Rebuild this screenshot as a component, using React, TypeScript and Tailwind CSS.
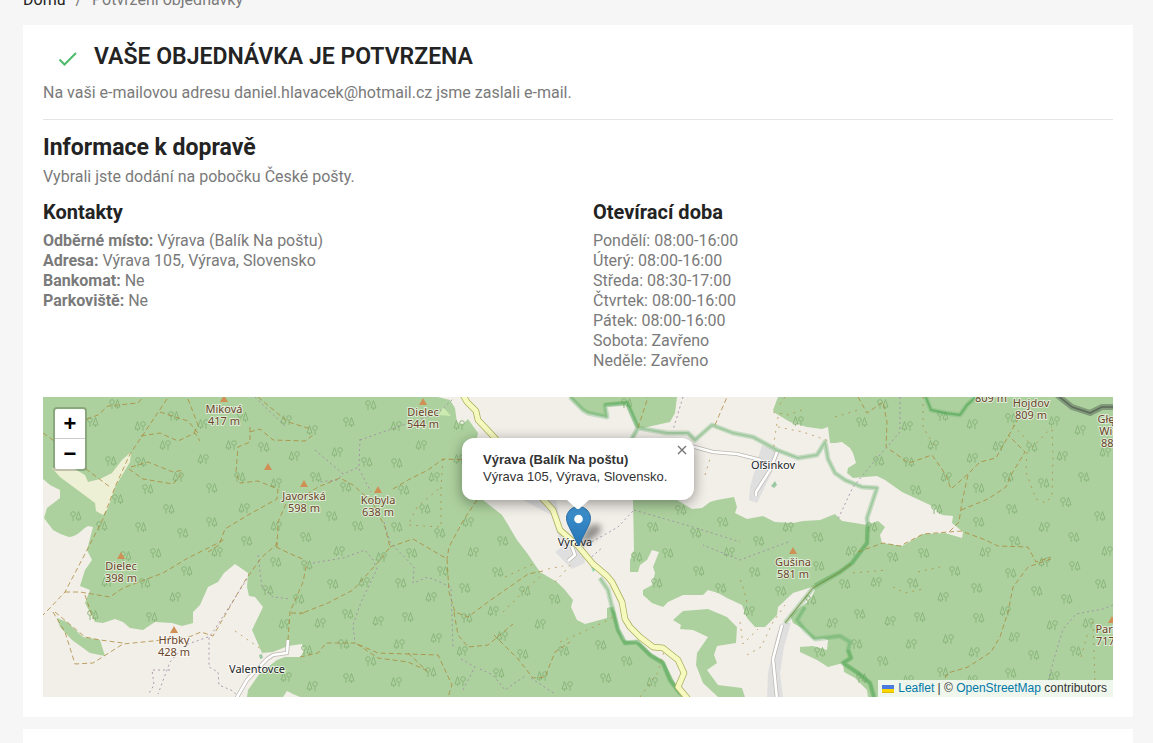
import { useState } from 'react'
import { clsx } from 'clsx'

const CONTACTS = [
  { label: 'Odběrné místo:', value: 'Výrava (Balík Na poštu)' },
  { label: 'Adresa:', value: 'Výrava 105, Výrava, Slovensko' },
  { label: 'Bankomat:', value: 'Ne' },
  { label: 'Parkoviště:', value: 'Ne' },
]

const OPENING_HOURS = [
  'Pondělí: 08:00-16:00',
  'Úterý: 08:00-16:00',
  'Středa: 08:30-17:00',
  'Čtvrtek: 08:00-16:00',
  'Pátek: 08:00-16:00',
  'Sobota: Zavřeno',
  'Neděle: Zavřeno',
]

const FOREST = [
  // west
  'M0 0H395L407 3 412 11 414 26 420 27 425 22 435 36 434 41 420 70 440 103 459 118 464 126 474 143 484 156 497 175 514 185 522 193 530 203 528 210 534 223 542 227 564 221 564 211 567 210 572 215 575 230 580 243 597 246 610 258 620 263 627 276 634 290 637 300H257L250 297 244 294 240 300H204L205 293 217 276 225 270 234 263 242 260 257 260 261 254 259 247 245 249 230 255 219 256 209 233 220 210 212 200 206 199 204 190 205 176 192 167 181 176 175 185 165 190 157 208 150 215 150 226 139 229 129 226 112 225 100 233 87 231 80 225 72 222 60 226 52 225 42 206 47 193 37 189 42 173 49 163 44 153 50 130 45 129C38 133 35 139 26 140 20 138 15 136 10 133L1 121 4 111 17 101V93L7 88 0 82Z',
  // east
  'M590 103H634L649 112 659 111 667 105 674 103 691 100 694 110 692 116 704 122 720 119 732 125 750 126 760 124 777 123 792 117 799 124 812 126 824 128 835 124 842 130 837 138 839 146 859 149 880 137 902 136 919 141 920 135 909 126 910 119 899 118 887 108 872 101 859 95 842 83 834 79 810 81 804 76 805 71 813 66 810 56 807 51 799 45 792 46H787L785 30 779 32 764 30 747 25 732 16 730 13 735 0H1070V300H825L824 293 812 281 801 275 800 266 785 270 774 263 757 255 757 250 770 249 784 253 785 243 780 241 770 242 762 233 750 226 747 218 767 203 772 193 769 190 750 196 735 210 734 218 722 230 712 230 704 221 699 208 684 201 675 196 665 193 660 198 640 198 625 205 620 210 609 206 600 198 600 193 609 188 612 176 610 170 616 155 609 153 604 163 597 168 595 175 587 175 587 163 591 153Z',
  'M527 0L540 13 545 16 564 20 562 8 584 6 595 30 600 31 627 25 632 16 634 0Z',
  'M630 223L640 214 665 212 684 220 694 230 693 246 674 249 671 258 674 266 664 273 675 288 699 291 702 300H675L660 286 653 268 654 256 665 240 650 233 637 232 638 228Z',
  'M14 221L24 225 40 240 57 243 62 259 47 256 29 243 17 230Z',
].join('')

const RESIDENTIAL = [
  'M480 103H513L522 143 540 156 542 166 529 172 512 155 519 150 508 118Z',
  'M719 48L737 55 730 73 714 106 706 103 707 90Z',
  'M739 226L748 226 741 250 737 276 740 300H724L725 276 733 240Z',
].join('')

// local road through the valley, drawn twice (casing + fill)
const MAIN_ROAD =
  'M420 -2L424 5 433 14 435 23 452 41 470 70 490 88 500 102 510 113 517 133 535 149 550 167 564 179 569 185 579 205 582 222 587 230 597 240 610 250 620 251 635 263 641 276 635 290 645 302'

const SMALL_ROADS = [
  'M648 49L670 55 694 57 710 61 718 63',
  'M734 55L727 73 713 95 713 99',
  'M193 302L204 283 224 262 230 258 244 256 245 243',
  'M739 228L730 262 734 302',
  'M529 150L532 158 525 164',
].join('')

const PARK_LINES = [
  'M527 0L540 13 545 16 564 20 562 8 584 6 595 31 587 45',
  'M595 31L624 36 645 36 652 43 669 28 690 36 710 40 734 53 755 61 774 58 782 45 785 62 792 76 802 83 819 90 834 91 824 121 825 130 824 146 809 166 797 175 770 191 742 226',
  'M762 210L754 223 762 233 772 242 797 239 807 245 805 253 808 261 800 266 815 276 827 286 831 300',
  'M557 181L565 193 569 210 575 233 582 246 594 245 607 258 620 266 627 283 640 300',
  'M882 -2L888 13 902 16 917 18 924 8 935 -2',
].join('')

const PARK_LINES_STRONG = [
  'M562 8L584 6 595 31',
  'M824 130L824 146 809 166 797 175 772 188',
  'M805 253L808 261 800 266 815 276 827 286 831 300',
  'M569 210L575 233 582 246 594 245 607 258 620 266 627 283 640 300',
].join('')

const TRACKS = [
  'M124 2L87 57 72 90 60 122 43 155 22 195 5 213 0 218',
  'M10 215L22 235 32 267 50 266 80 247 110 244 146 240 158 235 170 239 203 182 219 160 233 148 234 143',
  'M22 195L37 195 67 200 80 191 120 176 145 161 175 146 182 142',
  'M12 215L42 240 57 243 80 246',
  'M42 198L50 222',
  'M98 39L117 36 135 44 152 36 157 44M88 70L105 65 130 75 141 73M86 72L100 82 130 87 140 75',
  'M0 36L20 50 35 66 67 90M36 25L55 18 65 9 95 6 100 0',
  'M145 2L150 15 155 28 150 38M117 15L145 24 155 36',
  'M207 30L207 45 195 50 193 75 197 86 215 84 235 92 234 102 205 118 182 132 176 148 165 155',
  'M207 35L217 32 230 43 262 44 270 38M215 0L245 25 268 32',
  'M243 107L235 125 234 150',
  'M257 102L275 90 297 81 310 88 330 106 342 130 347 150 338 162 310 193 285 206 257 217',
  'M350 92L365 83 385 73 400 62 425 63',
  'M347 150L370 142 404 162 406 195 412 215 425 220 445 205 465 191 485 177 500 174',
  'M411 215L415 238 425 250 445 248 470 227M451 238L475 262 490 281 502 280 512 255 527 245',
  'M257 260L275 256 283 246 312 246 335 256 395 258 409 288 405 300',
  'M314 247L335 261 365 265 385 274M365 256L382 272',
  'M434 103L420 124 406 150 404 162',
  'M245 243L247 215 260 185 264 165M248 216L262 216M233 150L250 158 262 163',
  'M815 0L824 16 840 5 844 25 843 50 866 66 889 58 903 78 908 92 925 77 937 65 953 61 966 38 975 22',
  'M925 78L919 105 916 125 906 135M918 113L945 102 963 90 968 78 982 55 965 38',
  'M815 155L840 146 857 149 880 137 918 134 940 142 955 149 985 150 993 165 1008 160',
  'M1008 162L985 170 970 190 965 215 957 240 948 255 925 270 905 276 900 285 880 297',
  'M595 31L605 0M672 28L684 0',
].join('')

// footpaths, sparser dashes than the tracks
const PATHS = [
  'M400 62L398 90 398 130 365 128 374 110 398 90',
  'M792 20L815 13M880 0L880 30 892 50',
  'M984 55L983 75 993 102 1003 106 1009 98 1010 60 1009 30M970 28L990 50 1009 30',
  'M810 176L845 173M850 190L862 196 880 192M875 175L897 170',
  'M662 78L667 62M735 20L731 45 731 55M735 30L760 35 786 44',
  'M517 245L540 235 565 223 570 220M597 300L615 275 621 255',
  'M704 258L718 250 730 225 742 208M697 225L700 247 715 232M704 205L700 190 696 180',
  'M505 172L520 169M512 185L530 165M460 215L480 195 500 177M462 180L490 167',
  'M730 15L745 18 762 12M742 0L735 10M1038 260L1045 235M1050 225L1052 285M192 234L218 252',
].join('')

const BOUNDARIES = [
  'M212 0L243 30M272 53L300 77 294 83 275 85M317 42L316 70 300 77M316 72L328 95M317 43L360 28 395 16 410 2',
  'M341 125L347 145 371 170 370 186 385 180 408 190 410 252',
  'M270 166L300 161 322 153 330 163 334 172 318 205 310 228 312 246',
  'M418 262L432 270 424 285 420 293M437 272L450 278 462 293 482 279M488 281L512 297',
  'M204 182L170 235 166 240 166 270 175 275 176 288 190 294 195 300',
  'M165 240L142 248 127 265 115 297M127 273L109 273 111 288 105 298M215 158L219 190 230 200 247 202',
  'M540 150L575 130 591 113M591 113L650 130 697 145M640 0L630 33',
  'M857 0L857 35 830 66 810 90 795 122M745 145L697 163 660 148M545 163L560 150',
  'M1070 208L1060 212 1033 217 1020 232 1010 265 1005 285',
].join('')

// [x, y] pairs; pine on the right
const TREES = [
  72, 7, 50, 25, 131, 19, 68, 64, 98, 65, 200, 20, 221, 50, 105, 92, 197, 80, 169, 91, 75, 102, 126, 112, 33, 119,
  169, 125, 59, 129, 98, 130, 140, 136, 204, 144, 263, 140, 83, 159, 113, 156, 144, 174, 102, 186, 109, 220, 50, 218,
  233, 165, 225, 193, 256, 202, 328, 8, 306, 25, 324, 65, 354, 66, 273, 80, 303, 90, 361, 93, 382, 112, 289, 119,
  315, 129, 354, 130, 397, 136, 460, 144, 369, 156, 400, 174, 455, 175, 290, 187, 358, 186, 422, 191, 482, 194,
  512, 202, 305, 217, 365, 220, 424, 221, 480, 257, 521, 254, 328, 264, 388, 275, 306, 281, 456, 276, 264, 168,
  301, 247, 264, 253, 584, 6, 638, 113, 610, 130, 653, 136, 680, 125, 716, 144, 775, 140, 625, 156, 594, 160,
  656, 174, 614, 186, 678, 191, 712, 175, 776, 169, 738, 194, 768, 203, 558, 248, 584, 264, 563, 281, 777, 255,
  840, 7, 819, 25, 900, 19, 968, 21, 989, 50, 836, 64, 866, 65, 965, 80, 1041, 80, 873, 93, 936, 91, 1001, 86,
  1023, 105, 894, 112, 969, 112, 936, 125, 1057, 119, 972, 144, 1031, 140, 829, 130, 850, 160, 881, 156, 1032, 169,
  912, 174, 968, 176, 802, 187, 870, 186, 934, 191, 1058, 187, 994, 194, 1024, 202, 817, 217, 877, 220, 936, 221,
  814, 247, 991, 258, 1033, 254, 840, 264, 900, 275, 968, 276, 819, 281,
]

// pine on the left
const TREES_FLIPPED = [
  97, 29, 160, 27, 122, 48, 160, 62, 188, 48, 243, 23, 251, 59, 135, 80, 233, 86, 201, 111, 233, 129, 174, 155,
  64, 185, 132, 200, 241, 227, 243, 280, 269, 33, 353, 29, 378, 48, 416, 28, 294, 55, 416, 62, 391, 80, 425, 125,
  296, 154, 338, 160, 430, 155, 321, 185, 388, 200, 277, 226, 335, 224, 450, 214, 497, 227, 393, 241, 356, 247,
  459, 239, 419, 254, 499, 279, 353, 285, 417, 284, 269, 289, 755, 24, 745, 130, 686, 155, 706, 214, 789, 226,
  609, 285, 524, 289, 864, 29, 929, 27, 1011, 24, 1037, 33, 890, 48, 955, 49, 929, 61, 1019, 59, 1062, 55, 903, 80,
  1001, 130, 808, 154, 942, 155, 1064, 154, 1001, 165, 833, 185, 900, 200, 962, 214, 847, 224, 1009, 228,
  1045, 226, 905, 242, 868, 247, 971, 240, 931, 255, 1011, 279, 865, 283, 929, 283,
]

const PEAKS = [
  { x: 181, y: 2, labelY: 16, lines: ['Miková', '417 m'] },
  { x: 225, y: 70, labelY: 0, lines: [] },
  { x: 261, y: 87, labelY: 103, lines: ['Javorská', '598 m'] },
  { x: 335, y: 93, labelY: 107, lines: ['Kobyla', '638 m'] },
  { x: 380, y: 5, labelY: 19, lines: ['Dielec', '544 m'] },
  { x: 78, y: 159, labelY: 173, lines: ['Dielec', '398 m'] },
  { x: 131, y: 233, labelY: 247, lines: ['Hŕbky', '428 m'] },
  { x: 750, y: 154, labelY: 169, lines: ['Gušina', '581 m'] },
  { x: 948, y: -20, labelY: 5, lines: ['809 m'] },
  { x: 988, y: -20, labelY: 10, lines: ['Hojdov', '809 m'] },
  { x: 1074, y: -20, labelY: 26, lines: ['Głęboki', 'Wierch', '880 m'] },
  { x: 1069, y: 223, labelY: 236, lines: ['Paripa', '717 m'] },
]

const VILLAGES = [
  { name: 'Oľšinkov', x: 730, y: 72 },
  { name: 'Výrava', x: 532, y: 149 },
  { name: 'Valentovce', x: 214, y: 276 },
]

function toPairs(values: number[]) {
  return values.flatMap((v, i) => (i % 2 === 0 ? [[v, values[i + 1]]] : []))
}

function MapCanvas() {
  return (
    <svg viewBox="0 0 1070 300" preserveAspectRatio="xMidYMid slice" className="block h-full w-full" aria-hidden="true">
      <defs>
        <g id="trees" fill="none" stroke="#8ab57b" strokeWidth="1">
          <circle cx="-3" cy="-2" r="2.3" />
          <path d="M-3 .5V5M2.5 -4.5L5 3H0ZM2.5 3V5" />
        </g>
      </defs>
      <rect width="1070" height="300" fill="#f2efe9" />
      <path d={RESIDENTIAL} fill="#e0dfdf" />
      <path d={FOREST} fill="#add19e" />
      <path
        d="M9 71L17 80 52 106 53 114 60 118 65 111 72 90 87 65 88 55 79 63 69 76 57 82 45 85 42 78 30 71Z"
        fill="#eef0d5"
      />
      <path d="M396 18L400 10 408 19Z" fill="#cdebb0" />
      <path d="M728 89L732 84 734 88 731 91ZM216 258L219 257 220 261 217 262Z" fill="#9cc9a4" />
      <path d="M547 167L553 172 550 175Z" fill="#8ed8b4" />

      {toPairs(TREES).map(([x, y]) => (
        <use key={`${x}-${y}`} href="#trees" x={x} y={y} />
      ))}
      {toPairs(TREES_FLIPPED).map(([x, y]) => (
        <use key={`${x}-${y}`} href="#trees" transform={`translate(${x} ${y}) scale(-1 1)`} />
      ))}

      <g fill="none" strokeLinejoin="round">
        <path d={PARK_LINES} stroke="#5fab66" strokeOpacity="0.3" strokeWidth="5" />
        <path d={PARK_LINES} stroke="#5fab66" strokeOpacity="0.35" strokeWidth="2" />
        <path d={PARK_LINES_STRONG} stroke="#48a348" strokeOpacity="0.3" strokeWidth="4" />
        <path d="M882 -2L888 13 902 16 917 18 924 8 935 -2" stroke="#48a348" strokeOpacity="0.4" strokeWidth="2" />
        <path d="M1014 -2L1029 10 1047 16 1059 10 1070 10" stroke="#5c6e5c" strokeOpacity="0.55" strokeWidth="6" />
        <path d="M1014 -2L1029 10 1047 16 1059 10 1070 10" stroke="#4c554c" strokeOpacity="0.7" strokeWidth="1.5" />
        <path d={TRACKS} stroke="#a98436" strokeOpacity="0.75" strokeWidth="1" strokeDasharray="5 3" />
        <path d={PATHS} stroke="#a98436" strokeOpacity="0.65" strokeWidth="1" strokeDasharray="2 5" />
        <path d={BOUNDARIES} stroke="#9c86a4" strokeOpacity="0.8" strokeWidth="1" strokeDasharray="2 3" />
        <path d="M808 167L797 175 770 191 742 226" stroke="#8a8a3c" strokeOpacity="0.8" strokeWidth="1" />
        <path d={SMALL_ROADS} stroke="#bbb6b0" strokeWidth="4" />
        <path d={SMALL_ROADS} stroke="#ffffff" strokeWidth="2.6" />
        <path d={MAIN_ROAD} stroke="#a9ad5c" strokeWidth="6.5" />
        <path d={MAIN_ROAD} stroke="#f7fabf" strokeWidth="5" />
      </g>

      <g className="font-['Noto_Sans',sans-serif] text-[11px]" textAnchor="middle" paintOrder="stroke">
        {PEAKS.map((peak) => (
          <g key={`${peak.x}-${peak.y}`}>
            <path d={`M${peak.x} ${peak.y - 4}l4 7h-8z`} fill="#d08f55" />
            {peak.lines.map((line, i) => (
              <text
                key={line}
                x={peak.x}
                y={peak.labelY + i * 12}
                fill="#6b4428"
                stroke="#ffffff"
                strokeOpacity="0.6"
                strokeWidth="2"
              >
                {line}
              </text>
            ))}
          </g>
        ))}
        {VILLAGES.map((village) => (
          <text key={village.name} x={village.x} y={village.y} fill="#222222" stroke="#ffffff" strokeOpacity="0.7" strokeWidth="2">
            {village.name}
          </text>
        ))}
      </g>
    </svg>
  )
}

function Marker() {
  return (
    <svg
      viewBox="0 0 50 41"
      className="absolute top-[109px] left-1/2 -ml-3 h-[41px] w-[50px] overflow-visible"
      role="img"
      aria-label="Výrava"
    >
      <defs>
        <linearGradient id="pin" x1="0" y1="0" x2="0" y2="1">
          <stop offset="0" stopColor="#3f93cf" />
          <stop offset="1" stopColor="#2673b4" />
        </linearGradient>
        <filter id="soft" x="-30%" y="-30%" width="160%" height="160%">
          <feGaussianBlur stdDeviation="3" />
        </filter>
      </defs>
      <path d="M13 40L19 25C23 17 36 16 35 23 34 29 23 36 13 40Z" fill="#000000" fillOpacity="0.4" filter="url(#soft)" />
      <path
        d="M12.5 .5C5.9 .5 .5 5.9 .5 12.3c0 2.8 1.3 6 2.3 8L12.5 39.8l9.7-19.5c1-2 2.3-5.2 2.3-8C24.5 5.9 19.1 .5 12.5 .5z"
        fill="url(#pin)"
        stroke="#2c6fa6"
      />
      <circle cx="12.5" cy="13" r="4.3" fill="#ffffff" />
    </svg>
  )
}

function PickupMap() {
  const [popupOpen, setPopupOpen] = useState(true)

  return (
    <div className="relative mt-[26px] h-[300px] overflow-hidden bg-[#dddddd] font-['Liberation_Sans',Arial,sans-serif]">
      <MapCanvas />
      <Marker />

      {popupOpen && (
        <div className="absolute bottom-[188px] left-1/2 flex -translate-x-1/2 flex-col items-center">
          <div className="w-[232px] rounded-xl bg-white pt-[13px] pr-6 pb-[15px] pl-[21px] text-[13px] leading-[17px] whitespace-nowrap text-[#333333] shadow-[0_3px_14px_rgba(0,0,0,0.4)]">
            <b>Výrava (Balík Na poštu)</b>
            <br />
            Výrava 105, Výrava, Slovensko.
            <button
              type="button"
              aria-label="Zavřít"
              onClick={() => setPopupOpen(false)}
              className="absolute top-0 right-0 flex h-6 w-6 items-center justify-center text-[#757575]"
            >
              <svg viewBox="0 0 10 10" className="h-[10px] w-[10px]" stroke="currentColor" strokeWidth="1.4">
                <path d="M1 1L9 9M9 1L1 9" />
              </svg>
            </button>
          </div>
          <svg viewBox="0 0 22 9" className="h-[9px] w-[22px]" fill="#ffffff">
            <path d="M0 0H22L12 9H10Z" />
          </svg>
        </div>
      )}

      <div className="absolute top-[10px] left-[10px] flex flex-col overflow-hidden rounded border-2 border-black/20 bg-white bg-clip-padding">
        {['+', '−'].map((sign, i) => (
          <button
            key={sign}
            type="button"
            aria-label={i === 0 ? 'Přiblížit' : 'Oddálit'}
            className={clsx(
              'h-[30px] w-[30px] text-center text-[22px] leading-[30px] font-bold text-black',
              i === 0 && 'border-b border-[#cccccc]'
            )}
          >
            {sign}
          </button>
        ))}
      </div>

      <div className="absolute right-0 bottom-0 flex items-center bg-white/80 pr-[6px] pl-1 text-[12px] leading-[17px] whitespace-pre text-[#333333]">
        <a href="#leaflet" className="flex items-center gap-1 text-[#0078a8]">
          <svg viewBox="0 0 12 8" className="h-2 w-3">
            <path fill="#4c7be1" d="M0 0h12v4H0z" />
            <path fill="#ffd500" d="M0 4h12v3H0z" />
            <path fill="#e0bc00" d="M0 7h12v1H0z" />
          </svg>
          Leaflet
        </a>
        {' | © '}
        <a href="#osm" className="text-[#0078a8]">
          OpenStreetMap
        </a>
        {' contributors'}
      </div>
    </div>
  )
}

export default function App() {
  return (
    <div className="flex min-h-screen flex-col overflow-hidden bg-[#f6f6f6] pr-5 pl-[23px] font-[Roboto,sans-serif] text-base leading-5 text-[#7a7a7a]">
      <nav className="-mt-[10px] flex gap-[10px] pb-[15px]">
        <a href="#home" className="text-[#232323]">
          Domů
        </a>
        <span>/</span>
        <span>Potvrzení objednávky</span>
      </nav>

      <main className="bg-white px-5 pt-4 pb-5">
        <h1 className="flex items-center pl-[15px] text-[23px] leading-8 font-semibold text-[#232323]">
          <svg viewBox="0 0 20 16" className="mt-1 mr-4 h-4 w-5" fill="none" stroke="#4cbb6c" strokeWidth="2">
            <path d="M1.5 8.5L6.5 13.5 18 2" />
          </svg>
          VAŠE OBJEDNÁVKA JE POTVRZENA
        </h1>
        <p className="mt-[10px]">Na vaši e-mailovou adresu daniel.hlavacek@hotmail.cz jsme zaslali e-mail.</p>
        <hr className="mt-4 border-[#e5e5e5]" />

        <h2 className="mt-[14px] text-[23px] leading-7 font-bold text-[#232323]">Informace k dopravě</h2>
        <p className="mt-[5px]">Vybrali jste dodání na pobočku České pošty.</p>

        <div className="mt-[13px] grid grid-cols-2 gap-[30px]">
          <section>
            <h3 className="text-[20px] leading-6 font-bold text-[#232323]">Kontakty</h3>
            <ul className="mt-[7px]">
              {CONTACTS.map((item) => (
                <li key={item.label}>
                  <strong>{item.label}</strong> {item.value}
                </li>
              ))}
            </ul>
          </section>
          <section>
            <h3 className="text-[20px] leading-6 font-bold text-[#232323]">Otevírací doba</h3>
            <ul className="mt-[7px]">
              {OPENING_HOURS.map((line) => (
                <li key={line}>{line}</li>
              ))}
            </ul>
          </section>
        </div>

        <PickupMap />
      </main>

      <section className="mt-3 grow bg-white" />
    </div>
  )
}
